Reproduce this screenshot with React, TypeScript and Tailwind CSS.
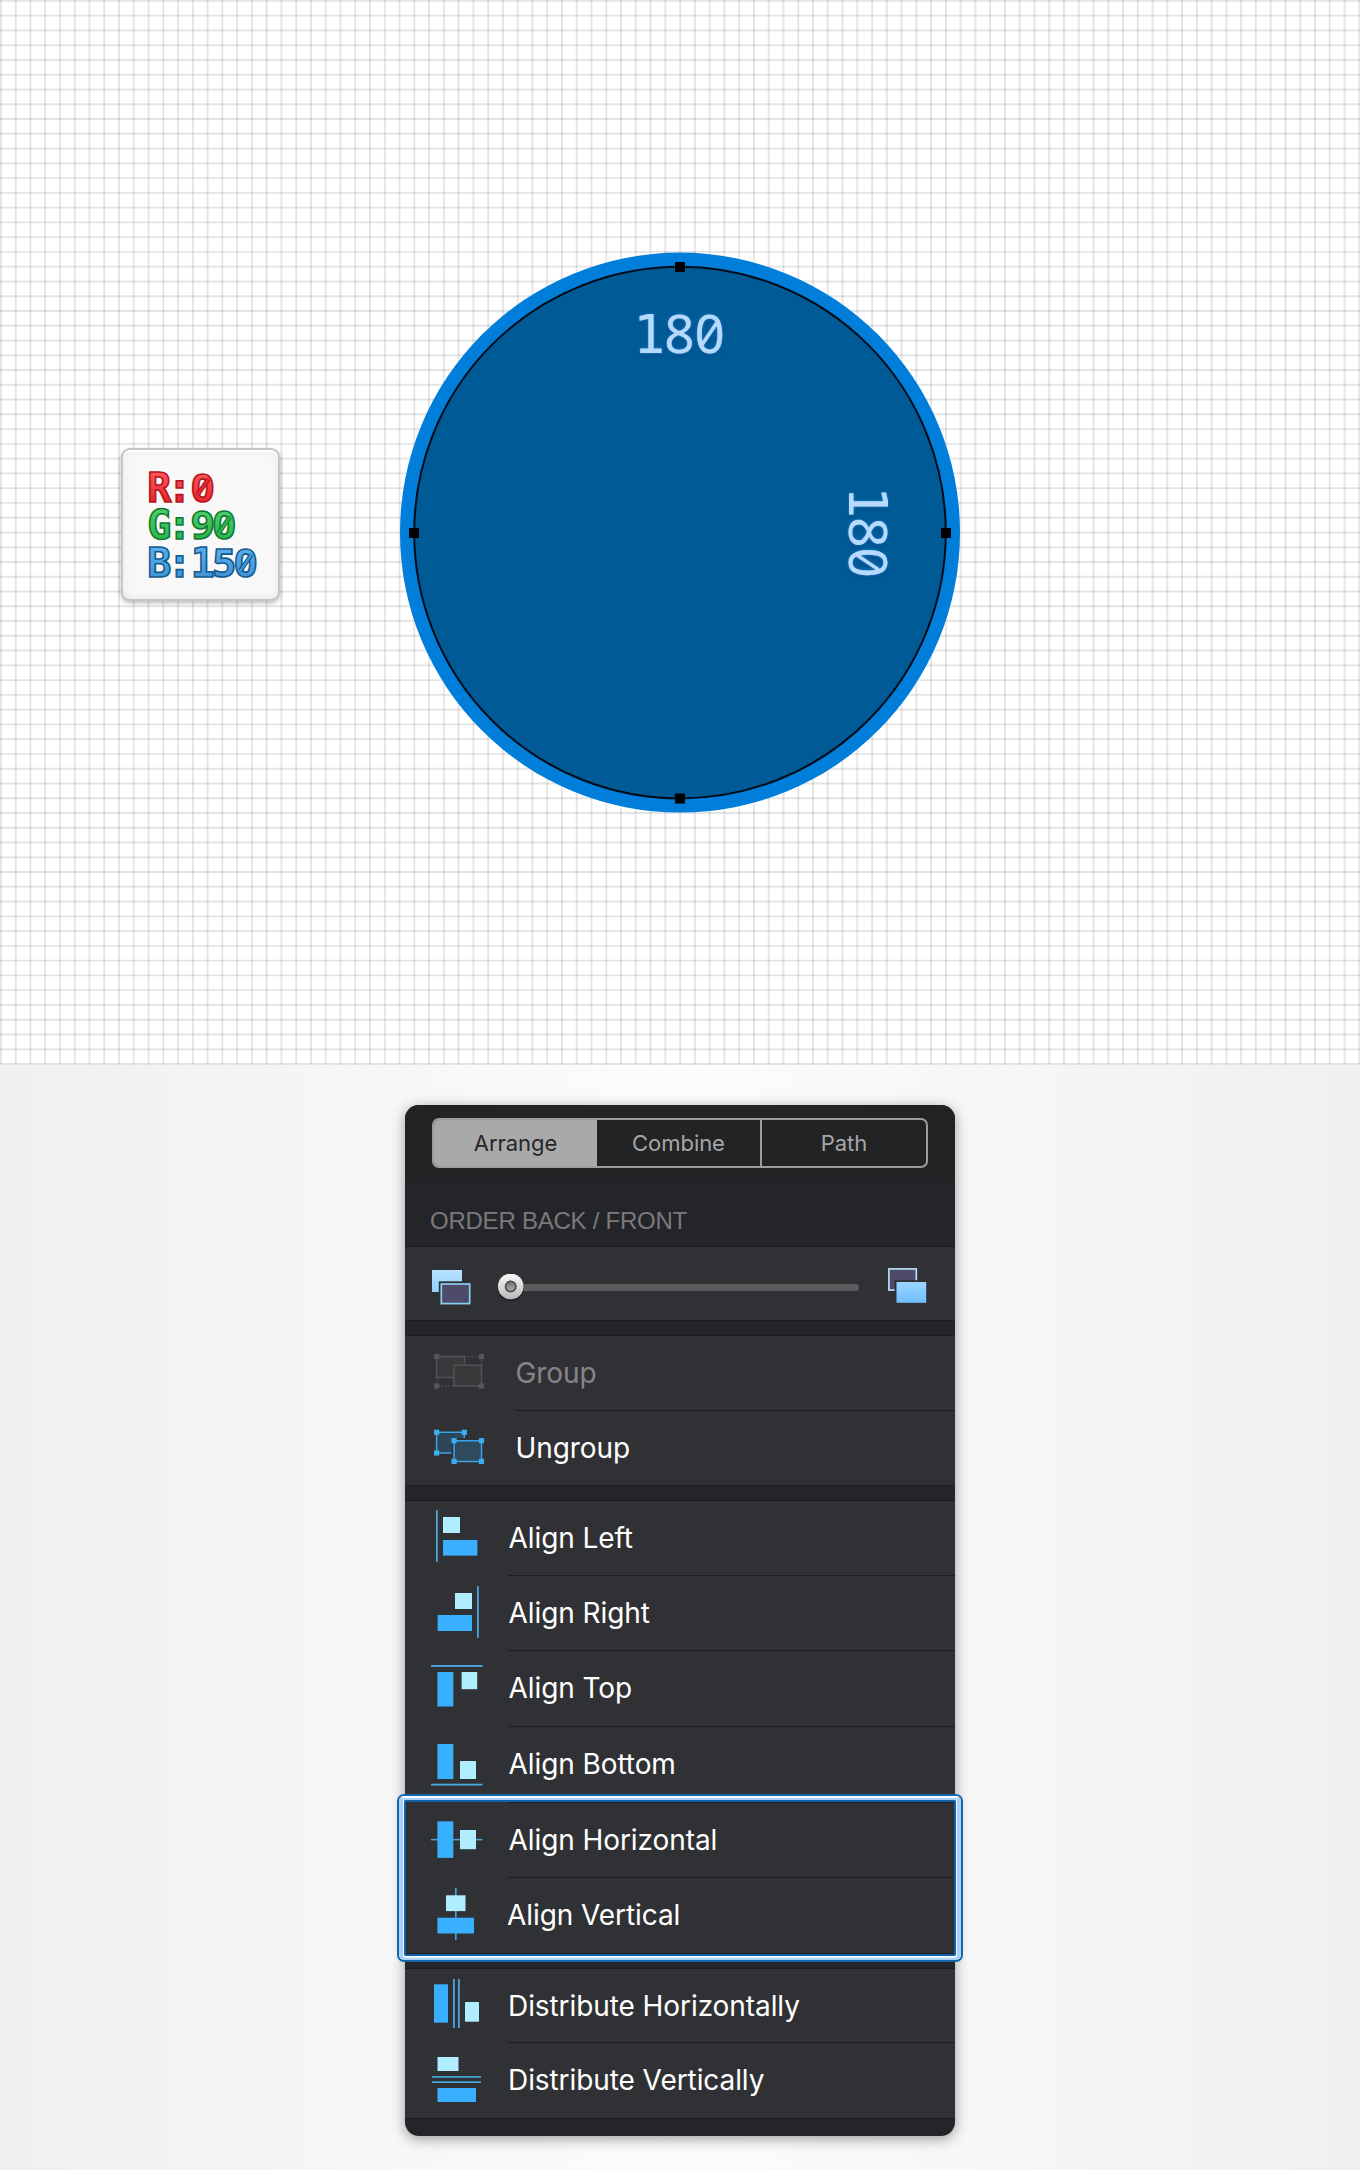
import React from "react";

const SKY = "#38afff";
const ICE = "#b0edff";
const LINE = "#4aa5dd";

const columns = Array.from({ length: 93 }, (_, i) => 0.9 + i * 14.765);
const rows = Array.from({ length: 73 }, (_, i) => 0.9 + i * 14.765);

function Grid() {
  return (
    <svg className="block h-full w-full" viewBox="0 0 1360 1065">
      <g stroke="#000" strokeOpacity="0.1" strokeWidth="1.9">
        {columns.map((x) => (
          <line key={x} x1={x} x2={x} y1="0" y2="1064.5" />
        ))}
        {rows.map((y) => (
          <line key={y} x1="0" x2="1360" y1={y} y2={y} />
        ))}
      </g>
    </svg>
  );
}

const MONO = "'DejaVu Sans Mono', monospace";
const SANS = "'Noto Sans', sans-serif";

function Dimension({ transform }: { transform: string }) {
  return (
    <g filter="url(#glow)">
      <g transform={transform} fill="#b5dafd" textAnchor="middle">
        <text fontSize="53" fontFamily={SANS}>
          <tspan x="-30" fontFamily={MONO}>1</tspan>
          <tspan x="0">8</tspan>
          <tspan x="30.3">0</tspan>
        </text>
        <path d="M22.8 -8.5L37.4 -30" stroke="#b5dafd" strokeWidth="3.4" />
      </g>
    </g>
  );
}

function Disc() {
  const nodes = [
    [680, 267],
    [946, 533],
    [680, 798.5],
    [414, 533],
  ];
  return (
    <svg className="absolute inset-0 h-full w-full" viewBox="0 0 1360 1065">
      <defs>
        <filter id="glow" x="-20%" y="-20%" width="140%" height="140%">
          <feDropShadow dx="0" dy="0" stdDeviation="1.4" floodColor="#1e86dc" floodOpacity="0.9" />
          <feDropShadow dx="0" dy="2" stdDeviation="1" floodColor="#00406f" floodOpacity="0.55" />
        </filter>
      </defs>
      <circle cx="680" cy="532.6" r="280" fill="#007ed9" />
      <circle cx="680" cy="532.6" r="265.8" fill="#005a96" stroke="#000c18" strokeWidth="2" />
      {nodes.map(([x, y]) => (
        <rect key={`${x}-${y}`} x={x - 5} y={y - 5} width="10" height="10" fill="#000" />
      ))}
      <Dimension transform="translate(679.3 353)" />
      <Dimension transform="translate(848.5 532.3) rotate(90)" />
    </svg>
  );
}

const centers = [159.3, 179.6, 202.8, 224.3, 245.8];

const channels = [
  { text: "R:0", y: 501.7, top: "#ff5c5c", bottom: "#e8252d", edge: "#b3151c", id: "red" },
  { text: "G:90", y: 539.4, top: "#52cf6b", bottom: "#2bb44a", edge: "#0e7a34", id: "green" },
  { text: "B:150", y: 577.3, top: "#5fb0ec", bottom: "#3f93d4", edge: "#145a8e", id: "blue" },
];

function ColorCard() {
  return (
    <div className="absolute left-[121px] top-[448px] h-[153px] w-[159px] rounded-[9px] border-2 border-[#c6c6c6] bg-[#f8f8f8] shadow-[0_2px_4px_rgba(0,0,0,0.28),inset_0_2px_1px_#fff,inset_0_0_10px_rgba(0,0,0,0.07)]">
      <svg className="block h-full w-full" viewBox="123 450 155 149">
        {channels.map((c) => {
          const zero = centers[c.text.length - 1];
          const slash = `M${zero - 5.6} ${c.y - 6.4}L${zero + 5.6} ${c.y - 22.6}`;
          return (
            <g key={c.id} fontSize="40" fontWeight="700" textAnchor="middle">
              <linearGradient id={c.id} x1="0" y1="0" x2="0" y2="1">
                <stop offset="0.2" stopColor={c.top} />
                <stop offset="0.8" stopColor={c.bottom} />
              </linearGradient>
              <text y={c.y} fill={`url(#${c.id})`} stroke={c.edge} strokeWidth="1.6">
                {c.text.split("").map((ch, i) => (
                  <tspan key={i} x={centers[i]} fontFamily={"950".includes(ch) ? SANS : MONO}>
                    {ch}
                  </tspan>
                ))}
              </text>
              <path d={slash} stroke={c.edge} strokeWidth="4.6" />
              <path d={slash} stroke={c.bottom} strokeWidth="2.4" strokeLinecap="square" />
            </g>
          );
        })}
      </svg>
    </div>
  );
}

function SendBackIcon() {
  return (
    <svg className="block h-[38px] w-[42px]" viewBox="0 0 42 38">
      <linearGradient id="backFill" x1="0" y1="0" x2="0" y2="1">
        <stop offset="0" stopColor="#b8e2ff" />
        <stop offset="1" stopColor="#8fd0ff" />
      </linearGradient>
      <rect x="0" y="1" width="30" height="22" fill="url(#backFill)" />
      <rect x="6.8" y="12.3" width="33" height="25" fill="#303134" />
      <rect x="9.3" y="15" width="28.4" height="19.6" fill="#4e4b68" stroke="#8ccdf2" strokeWidth="1.7" />
    </svg>
  );
}

function BringFrontIcon() {
  return (
    <svg className="block h-[38px] w-[40px]" viewBox="0 0 40 38">
      <linearGradient id="frontFill" x1="0" y1="0" x2="0" y2="1">
        <stop offset="0" stopColor="#9bd5ff" />
        <stop offset="1" stopColor="#70beff" />
      </linearGradient>
      <rect x="0.9" y="0.9" width="27.4" height="21.2" fill="#4e4b68" stroke="#b5dcf8" strokeWidth="1.7" />
      <rect x="6.6" y="12.2" width="33" height="24" fill="#303134" />
      <rect x="8.5" y="14" width="29.7" height="20.8" fill="url(#frontFill)" />
    </svg>
  );
}

function Knob() {
  return (
    <svg className="absolute -left-[14px] top-[-10px] h-[30px] w-[30px]" viewBox="0 0 30 30">
      <defs>
        <linearGradient id="knob" x1="0" y1="0" x2="0" y2="1">
          <stop offset="0" stopColor="#fafafa" />
          <stop offset="1" stopColor="#b9b9b9" />
        </linearGradient>
        <linearGradient id="pit" x1="0" y1="0" x2="0" y2="1">
          <stop offset="0" stopColor="#6c6c6c" />
          <stop offset="1" stopColor="#b0b0b0" />
        </linearGradient>
      </defs>
      <circle cx="14.7" cy="13.8" r="13.4" fill="#18191a" opacity="0.6" />
      <circle cx="14.7" cy="12.4" r="12.8" fill="url(#knob)" />
      <circle cx="14.7" cy="12.4" r="5.2" fill="url(#pit)" stroke="#4a4a4a" strokeWidth="1.6" />
    </svg>
  );
}

type Box = [number, number, number, number];

function Bars({ lines, ice, sky }: { lines: Box[]; ice: Box; sky: Box }) {
  return (
    <svg className="block h-[74px] w-[60px] shrink-0" viewBox="0 0 60 74">
      {lines.map(([x, y, w, h]) => (
        <rect key={`${x}-${y}`} x={x} y={y} width={w} height={h} fill={LINE} />
      ))}
      <rect x={sky[0]} y={sky[1]} width={sky[2]} height={sky[3]} fill={SKY} />
      <rect x={ice[0]} y={ice[1]} width={ice[2]} height={ice[3]} fill={ICE} />
    </svg>
  );
}

function Handles({ points, color }: { points: [number, number][]; color: string }) {
  return (
    <>
      {points.map(([x, y]) => (
        <rect key={`${x}-${y}`} x={x - 2.6} y={y - 2.6} width="5.2" height="5.2" fill={color} />
      ))}
    </>
  );
}

function GroupIcon() {
  return (
    <svg className="block h-[74px] w-[60px] shrink-0" viewBox="0 0 60 74">
      <g stroke="#505155" strokeWidth="1.6" fill="#39393c">
        <path d="M6.6 20.6H34.5V41.5H6.6Z" />
        <path d="M24 29.3H51.5V50H24Z" />
        <path d="M34.5 20.6H51.5V29.3M6.6 41.5V50H24" fill="none" strokeDasharray="1.6 1.8" />
      </g>
      <Handles color="#55565a" points={[[6.6, 20.6], [51.5, 20.6], [6.6, 50], [51.5, 50]]} />
    </svg>
  );
}

function UngroupIcon() {
  return (
    <svg className="block h-[74px] w-[60px] shrink-0" viewBox="0 0 60 74">
      <g stroke="#3ba4e8" strokeWidth="1.5">
        <path d="M6.6 21.3H34.3V42H6.6Z" fill="#2d4759" />
        <path d="M21.5 27H55V54H21.5Z" fill="#303134" stroke="none" />
        <path d="M24 29.7H51.5V50.4H24Z" fill="#2f4a5c" />
      </g>
      <Handles
        color="#3badf5"
        points={[[6.6, 21.3], [34.3, 21.3], [6.6, 42], [24, 29.7], [51.5, 29.7], [24, 50.4], [51.5, 50.4]]}
      />
    </svg>
  );
}

function Item({
  icon,
  label,
  height = "h-[75px]",
  offset = "pl-[18.5px]",
  rule = "left-[103px]",
  tone = "text-white",
}: {
  icon: React.ReactNode;
  label: string;
  height?: string;
  offset?: string;
  rule?: string | null;
  tone?: string;
}) {
  return (
    <div className={`relative flex items-start pl-[25px] ${height}`}>
      {icon}
      <span
        className={`flex h-[74px] items-center whitespace-nowrap text-[28px] leading-none tracking-[-0.08px] ${offset} ${tone}`}
      >
        {label}
      </span>
      {rule && <span className={`absolute right-0 bottom-0 h-px bg-[#1d1e21] ${rule}`} />}
    </div>
  );
}

const tabs = ["Arrange", "Combine", "Path"];

function Panel() {
  return (
    <div className="relative h-[1031px] w-[550px] rounded-[14px] bg-[#242528] font-[Inter,sans-serif] shadow-[0_3px_14px_rgba(0,0,0,0.38)]">
      <div className="h-[76px] rounded-t-[14px] border-b border-[#1e1f21] bg-[#222325] px-[27px] pt-[13px]">
        <div className="grid h-[50px] grid-cols-[163px_165px_1fr] overflow-hidden rounded-[7px] border-2 border-[#9c9c9e] text-[22px] tracking-[-0.05px] text-[#a6a6a8]">
          {tabs.map((t, i) => (
            <div
              key={t}
              className={
                i === 0
                  ? "flex items-center justify-center bg-[#a9a9a9] text-[#26272a]"
                  : i === 1
                    ? "flex items-center justify-center border-r-2 border-[#9c9c9e]"
                    : "flex items-center justify-center"
              }
            >
              {t}
            </div>
          ))}
        </div>
      </div>

      <div className="flex h-[66px] items-end border-b border-[#1b1c1e] pb-[11px] pl-[25px] font-['Liberation_Sans',Arial,sans-serif] text-[24px] leading-[28px] tracking-[-0.24px] text-[#7a7a7c]">
        ORDER BACK / FRONT
      </div>

      <div className="flex h-[74px] items-start border-b border-[#1b1c1e] bg-[#303134] pl-[27px]">
        <div className="pt-[22px]">
          <SendBackIcon />
        </div>
        <div className="relative ml-[36px] mt-[37px] h-[7px] w-[349px] rounded-full bg-[#5c5c5c]">
          <Knob />
        </div>
        <div className="ml-[29px] pt-[21px]">
          <BringFrontIcon />
        </div>
      </div>

      <div className="h-[15px] border-b border-[#1b1c1e]" />

      <div className="border-b border-[#1b1c1e] bg-[#303134]">
        <Item icon={<GroupIcon />} label="Group" offset="pl-[25.5px]" rule="left-[110px]" tone="text-[#858588]" />
        <Item icon={<UngroupIcon />} label="Ungroup" offset="pl-[25.5px]" height="h-[74px]" rule={null} />
      </div>

      <div className="h-[15px] border-b border-[#1b1c1e]" />

      <div className="bg-[#303134]">
        <Item
          label="Align Left"
          icon={<Bars lines={[[6, 9, 1.8, 52]]} ice={[13, 16, 17, 16]} sky={[13, 39, 34.4, 15.6]} />}
        />
        <Item
          label="Align Right"
          icon={<Bars lines={[[47, 10, 1.8, 52]]} ice={[25, 17, 17, 16]} sky={[7.6, 39, 34.4, 16]} />}
        />
        <Item
          label="Align Top"
          height="h-[76px]"
          icon={<Bars lines={[[1, 14, 51.5, 1.9]]} ice={[31.6, 21, 15.6, 17.2]} sky={[7.4, 21, 15.9, 34.5]} />}
        />
        <Item
          label="Align Bottom"
          height="h-[76px]"
          icon={<Bars lines={[[1, 56.7, 51.5, 1.9]]} ice={[30, 34, 16, 18]} sky={[7.4, 17, 15.9, 35]} />}
        />
        <Item
          label="Align Horizontal"
          icon={<Bars lines={[[1, 35.9, 51.5, 1.5]]} ice={[30, 27, 16, 19.2]} sky={[7.4, 18.3, 15.9, 36.6]} />}
        />
        <Item
          label="Align Vertical"
          offset="pl-[17px]"
          rule={null}
          icon={<Bars lines={[[25, 10, 1.6, 52]]} ice={[16, 17.3, 19.5, 15.8]} sky={[7.4, 39.7, 36.6, 15.8]} />}
        />
      </div>

      <div className="h-[16px] border-y border-[#1b1c1e]" />

      <div className="border-b border-[#1b1c1e] bg-[#303134]">
        <Item
          label="Distribute Horizontally"
          height="h-[74px]"
          offset="pl-[18px]"
          icon={<Bars lines={[[23, 10, 1.8, 49], [28, 10, 1.8, 49]]} ice={[35, 33, 14, 19.7]} sky={[4, 15.3, 14, 38.4]} />}
        />
        <Item
          label="Distribute Vertically"
          offset="pl-[18px]"
          rule={null}
          icon={<Bars lines={[[2, 33, 49, 1.7], [2, 38.3, 49, 1.7]]} ice={[7.5, 14, 21, 14]} sky={[7.5, 45, 38.5, 14]} />}
        />
      </div>

      <div className="absolute -left-[8px] top-[689px] h-[168px] w-[566px] rounded-[7px] border-2 border-[#1467ad]">
        <div className="h-full w-full rounded-[5px] border-x-4 border-y-2 border-[#a8d0fa] border-t-[#f4faff]">
          <div className="h-full w-full rounded-[3px] border-x border-y-2 border-[#eef6ff] border-t-[#a8d0fa]">
            <div className="h-full w-full rounded-[2px] border-2 border-[#0f62a8]" />
          </div>
        </div>
      </div>
    </div>
  );
}

export default function App() {
  return (
    <div className="h-[2170px] w-[1360px] overflow-hidden bg-white">
      <div className="relative h-[1065px] bg-white">
        <Grid />
        <Disc />
        <ColorCard />
      </div>
      <div className="flex h-[1105px] justify-center bg-[linear-gradient(90deg,#f0f0f0_0%,#f6f6f6_25%,#fcfcfc_50%,#f6f6f6_75%,#f0f0f0_100%)] pt-[40px]">
        <Panel />
      </div>
    </div>
  );
}
